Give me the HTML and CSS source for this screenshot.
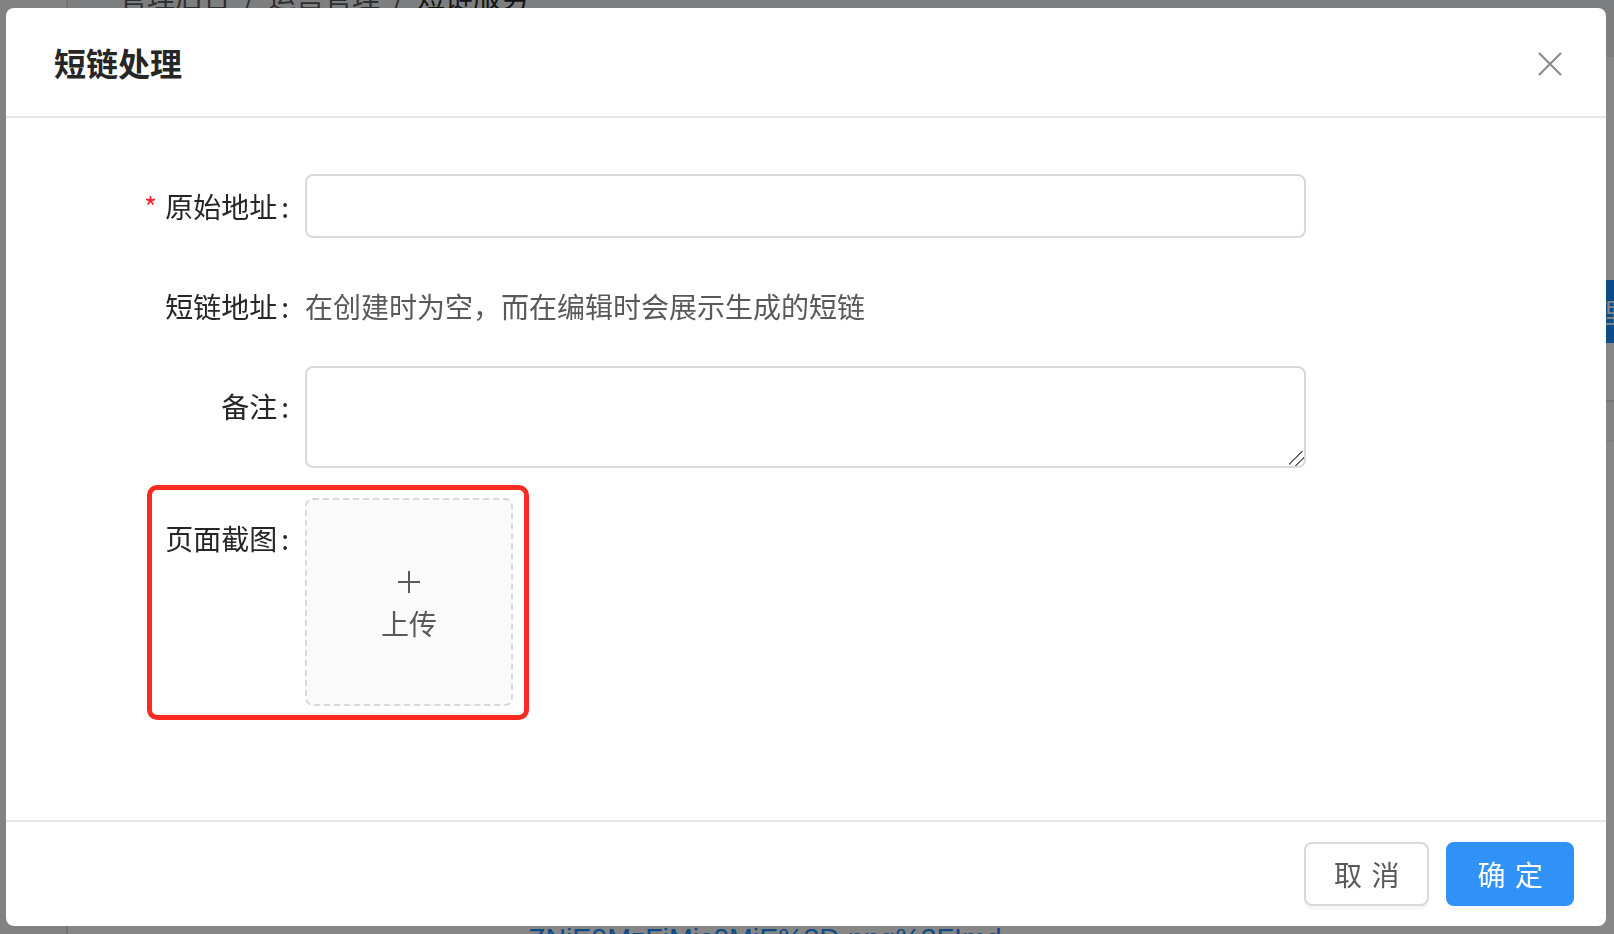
FILE: index.html
```html
<!DOCTYPE html>
<html lang="zh-CN">

<head>
  <meta charset="UTF-8">
  <meta name="viewport" content="width=device-width, initial-scale=1.0">
  <title>短链处理</title>
  <link rel="stylesheet" href="styles.css">
</head>

<body>
  <!-- 背后的页面 -->
  <div class="page">
    <div class="page-head">
      <div class="breadcrumb">
        <span>管理后台</span><i>/</i><span>运营管理</span><i>/</i><b>短链服务</b>
      </div>
    </div>
    <div class="toolbar">
      <button class="page-btn">管理</button>
    </div>
    <div class="table-head"></div>
    <a class="page-link">ZNjE0MzFiMjc0MjE%3D.png%3FImd</a>
  </div>

  <div class="mask"></div>

  <div class="modal-wrap">
    <div class="modal">
      <div class="modal-header">
        <div class="modal-title">短链处理</div>
        <svg class="modal-close" viewBox="0 0 24 24">
          <path d="M1 1 L23 23 M23 1 L1 23" stroke="#8c8c8c" stroke-width="2.2" fill="none" />
        </svg>
      </div>

      <div class="modal-body">
        <div class="form-item">
          <label class="form-label required">原始地址</label>
          <div class="form-control">
            <input class="input" type="text">
          </div>
        </div>
        <div class="form-item">
          <label class="form-label">短链地址</label>
          <div class="form-control">
            <span class="form-text">在创建时为空，而在编辑时会展示生成的短链</span>
          </div>
        </div>
        <div class="form-item form-item-top remark">
          <label class="form-label">备注</label>
          <div class="form-control">
            <textarea class="textarea"></textarea>
          </div>
        </div>
        <div class="form-item form-item-top shot">
          <label class="form-label">页面截图</label>
          <div class="form-control">
            <div class="upload">
              <svg class="upload-plus" viewBox="0 0 22 22">
                <path d="M11 0 V22 M0 11 H22" stroke="#595959" stroke-width="2" fill="none" />
              </svg>
              <div class="upload-text">上传</div>
            </div>
          </div>
          <div class="mark"></div>
        </div>
      </div>

      <div class="modal-footer">
        <button class="btn"><span>取消</span></button>
        <button class="btn btn-primary"><span>确定</span></button>
      </div>
    </div>
  </div>
</body>

</html>
```

FILE: styles.css
```css
* {
  box-sizing: border-box;
}

body {
  margin: 0;
  height: 934px;
  overflow: hidden;
  background: #f5f5f5;
  font-family: "Noto Sans CJK SC", "Noto Sans", sans-serif;
}

/* 背后的页面 */
.page {
  height: 934px;
  margin-left: 66px;
  border-left: 2px solid #d9d9d9;
  background: #fff;
  display: flex;
  flex-direction: column;
}

.page-head {
  height: 57px;
  background: #eceef1;
  padding-left: 51px;
}

.breadcrumb {
  margin-top: -24px;
  font-size: 28px;
  line-height: 40px;
  color: #595959;
}

.breadcrumb i {
  font-style: normal;
  margin: 0 13px;
}

.breadcrumb b {
  font-weight: normal;
  color: #262626;
}

.toolbar {
  margin-top: 223px;
  display: flex;
  justify-content: flex-end;
}

.page-btn {
  height: 63px;
  margin-right: -40px;
  padding: 0 30px;
  border: none;
  border-radius: 8px;
  background: #1890ff;
  color: #fff;
  font-family: inherit;
  font-size: 28px;
}

.table-head {
  margin-top: 57px;
  height: 42px;
  border-top: 2px solid #e0e0e0;
  border-bottom: 2px solid #f0f0f0;
  background: #fafafa;
}

.page-link {
  margin-top: auto;
  margin-bottom: -24px;
  margin-left: 460px;
  font-family: "Liberation Sans", sans-serif;
  font-size: 28.5px;
  line-height: 40px;
  color: #1890ff;
  white-space: nowrap;
}

.mask {
  position: fixed;
  inset: 0;
  background: rgba(0, 0, 0, 0.47);
}

/* 弹窗 */
.modal-wrap {
  position: fixed;
  inset: 0;
  padding: 8px 0 0 6px;
}

.modal {
  width: 1600px;
  height: 918px;
  background: #fff;
  border-radius: 8px;
  display: flex;
  flex-direction: column;
}

.modal-header {
  height: 110px;
  flex-shrink: 0;
  padding: 0 44px 0 48px;
  border-bottom: 2px solid #e8e8e8;
  display: flex;
  align-items: center;
  justify-content: space-between;
}

.modal-title {
  font-size: 32px;
  line-height: 44px;
  font-weight: 700;
  color: #262626;
}

.modal-close {
  width: 24px;
  height: 24px;
  margin-top: 4px;
}

.modal-body {
  flex: 1;
  padding: 48px 48px 0;
}

.form-item {
  display: flex;
  margin-bottom: 20px;
}

.form-item.remark {
  margin-bottom: 30px;
}

.form-item.shot {
  position: relative;
}

.form-label {
  width: 251px;
  height: 80px;
  flex-shrink: 0;
  text-align: right;
  white-space: nowrap;
  font-size: 28px;
  line-height: 80px;
  color: #262626;
}

.form-label::after {
  content: ":";
  margin: 0 16px 0 4px;
}

.form-label.required::before {
  content: "*";
  margin-right: 8px;
  color: #f5222d;
}

.form-control {
  width: 1001px;
  min-height: 80px;
  display: flex;
  align-items: center;
}

.form-item-top .form-control {
  align-items: flex-start;
  min-height: 0;
}

.form-text {
  font-size: 28px;
  color: #595959;
}

.input {
  width: 100%;
  height: 64px;
  padding: 0 22px;
  border: 2px solid #d9d9d9;
  border-radius: 8px;
  font-family: inherit;
  font-size: 28px;
  outline: none;
}

.textarea {
  display: block;
  width: 100%;
  height: 102px;
  padding: 8px 22px;
  border: 2px solid #d9d9d9;
  border-radius: 8px;
  font-family: inherit;
  font-size: 28px;
  resize: vertical;
  outline: none;
}

.textarea::-webkit-resizer {
  background: linear-gradient(135deg, transparent 42%, #666 42%, #666 50%, transparent 50%, transparent 68%, #666 68%, #666 76%, transparent 76%);
}

.upload {
  width: 208px;
  height: 208px;
  padding-top: 9px;
  border: 2px dashed #d9d9d9;
  border-radius: 8px;
  background: #fafafa;
  display: flex;
  flex-direction: column;
  align-items: center;
  justify-content: center;
}

.upload-plus {
  width: 22px;
  height: 22px;
}

.upload-text {
  margin-top: 10px;
  font-size: 28px;
  line-height: 40px;
  color: #595959;
}

/* 红框标注 */
.mark {
  position: absolute;
  left: 93px;
  top: -13px;
  width: 382px;
  height: 235px;
  border: 5px solid #fa2c22;
  border-radius: 10px;
}

.modal-footer {
  flex-shrink: 0;
  padding: 20px 32px;
  border-top: 2px solid #e8e8e8;
  display: flex;
  justify-content: flex-end;
  gap: 17px;
}

.btn {
  height: 64px;
  padding: 0 28px;
  border: 2px solid #d9d9d9;
  border-radius: 8px;
  background: #fff;
  color: #595959;
  font-family: inherit;
  font-size: 28px;
  line-height: 60px;
  white-space: nowrap;
  box-shadow: 0 4px 0 rgba(0, 0, 0, 0.03);
  cursor: pointer;
}

.btn span {
  letter-spacing: 0.34em;
  margin-right: -0.34em;
}

.btn-primary {
  padding: 0 29px;
  background: #3091f7;
  border-color: #3091f7;
  color: #fff;
}
```
